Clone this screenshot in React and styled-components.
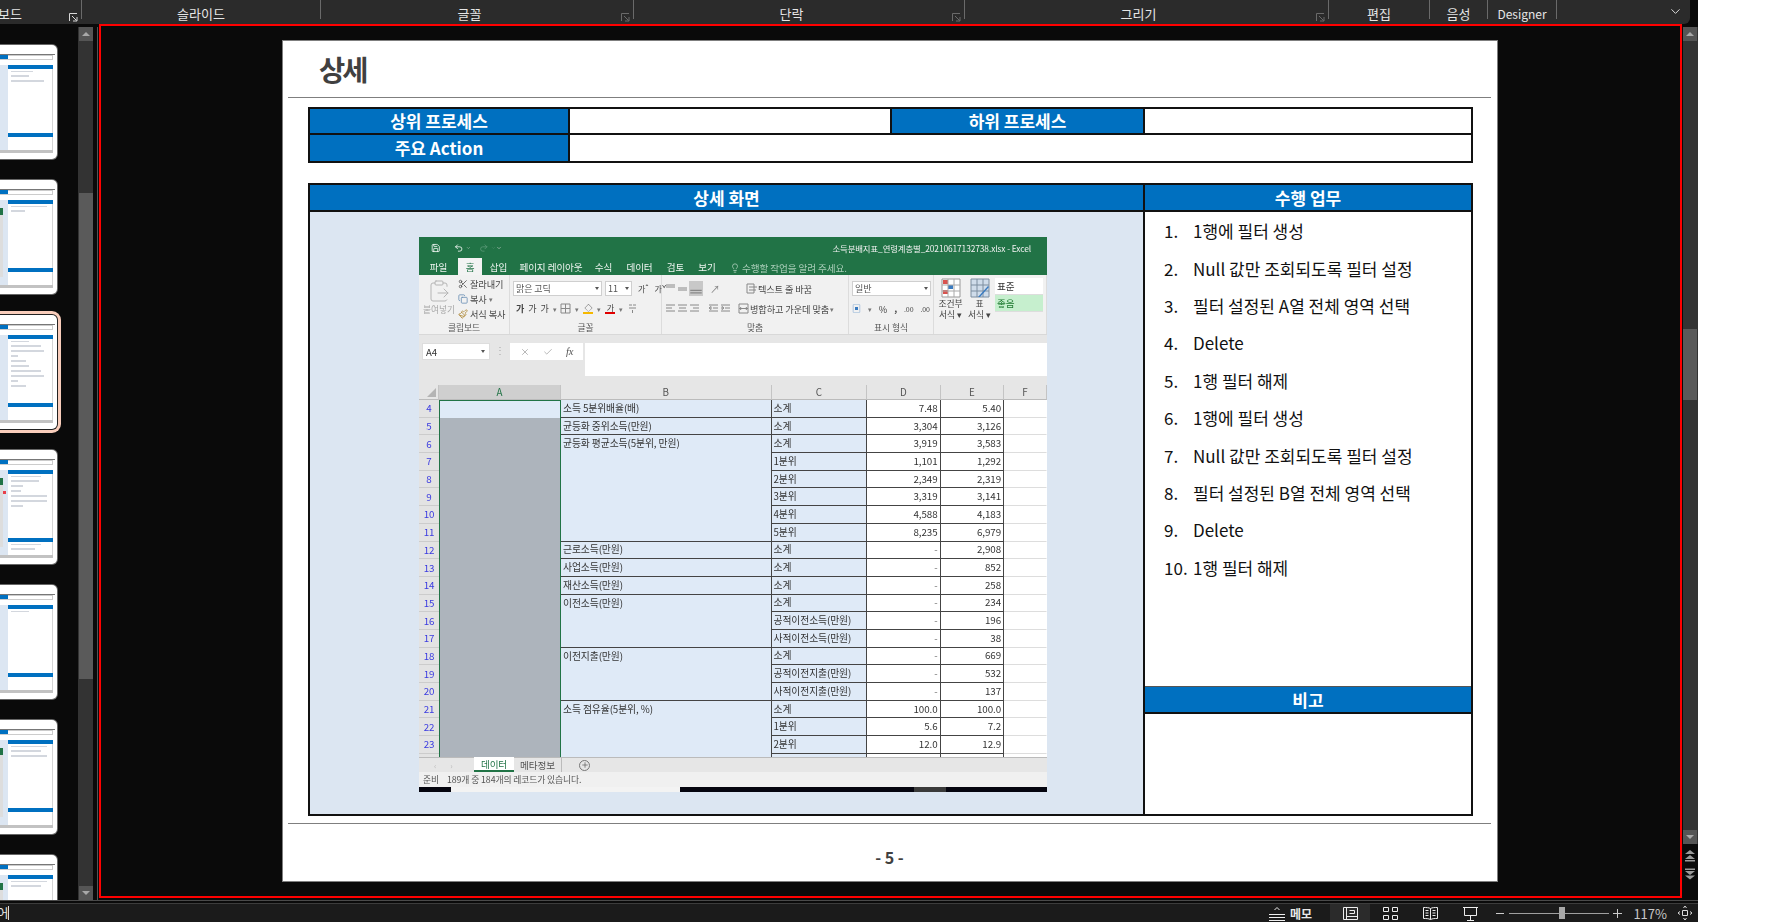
import React from 'react';
import styled, { createGlobalStyle } from 'styled-components';
import { Save, Undo2, Redo2, Lightbulb, Scissors, Copy, Paintbrush, ClipboardPaste, ChevronDown, Plus, X, Check } from 'lucide-react';

const FONT = '"Noto Sans CJK KR", "Noto Sans", "Liberation Sans", sans-serif';

const Global = createGlobalStyle`
  html, body { margin: 0; padding: 0; background: #fff; overflow: hidden; }
  * { box-sizing: border-box; }
  body { font-family: ${FONT}; }
`;

const AppFrame = styled.div`
  width: 1698px; height: 922px; background: #0a0a0a;
  display: flex; flex-direction: column; overflow: hidden;
`;

/* ---------- ribbon ---------- */
const RibbonBar = styled.div`
  height: 24px; width: 1690px; flex: none; background: #2b2b2b; display: flex;
  border-bottom-right-radius: 6px; color: #e6e6e6; font-size: 13px;
`;
const RibbonSeg = styled.div`
  width: ${p => p.$w}px; height: 19px; position: relative; flex: none;
  display: flex; align-items: center; justify-content: ${p => p.$start ? 'flex-start' : 'center'};
  padding-right: ${p => p.$pr || 0}px; padding-top: 7px; white-space: nowrap;
  font-size: ${p => p.$fs || 13}px;
  border-right: 1px solid #6a6a6a;
`;
const Expander = styled.svg`
  position: absolute; right: 3px; bottom: -3px; width: 9px; height: 9px;
`;
const ChevronSlot = styled.div`
  flex: 1; display: flex; justify-content: flex-end; align-items: center; padding: 4px 7px 6px 0; color: #e8e8e8;
`;
const CutLabel = styled.span`margin-left: -26px;`;
const Exp = ({ dim }) => (
  <Expander viewBox="0 0 9 9" fill="none" stroke={dim ? '#6a6a6a' : '#d8d8d8'} strokeWidth="1">
    <path d="M.5 8V.5H8M3 3l4.5 4.5M8 4v4H4" />
  </Expander>
);

/* ---------- main ---------- */
const MainRow = styled.div`flex: 1; display: flex; min-height: 0;`;
const LeftPane = styled.div`width: 99px; flex: none; display: flex;`;
const ThumbColumn = styled.div`
  width: 78px; flex: none; overflow: hidden; padding-top: 20.500px;
  display: flex; flex-direction: column; gap: 21px;
`;
const Thumb = styled.div`
  width: 57px; height: 114px; flex: none; background: #fff; border-radius: 0 5px 5px 0; padding-top: 9px;
  display: flex; flex-direction: column;
  box-shadow: ${p => p.$sel ? '0 0 0 1px #222, 0 0 0 4px #f9cdbb' : '0 0 0 1px #666'};
  position: relative;
`;
const ThumbRule = styled.div`height: 1px; width: 55px; background: #777; flex: none;`;
const ThumbTop = styled.div`
  height: 5px; width: 53px; flex: none; display: flex; border: 1px solid #ccc; border-left: none;
  &::before { content: ''; width: 8px; margin-top: -1px; height: 4px; background: #0070c0; }
`;
const ThumbBody = styled.div`flex: none; margin-top: 5px; height: 85px; width: 53px; display: flex;`;
const ThumbShot = styled.div`width: 8px; background: #dce6f2; padding-top: ${p => p.$shot ? 8 : 0}px; display: flex; flex-direction: column; flex: none;`;
const ThumbGreen = styled.div`width: 3px; height: 7px; background: #217346; flex: none;`;
const ThumbSheet = styled.div`width: 3px; height: 62px; background: #ddd; flex: none;`;
const ThumbRed = styled.div`width: 6px; height: 3px; background: #e8404a; margin: 6px 0 -9px; flex: none;`;
const ThumbRight = styled.div`flex: 1; border-right: 1.5px solid #d5d5d5; display: flex; flex-direction: column;`;
const ThumbHead = styled.div`height: 4px; background: #0070c0; flex: none; margin-right: -1px;`;
const ThumbList = styled.div`height: ${p => p.$h || 64}px; padding: 2px 0 0 3px; display: flex; flex-direction: column; gap: 3.1px; flex: none;`;
const ThumbLine = styled.div`height: 1.9px; width: ${p => p.$w}px; background: #d3d7de; flex: none;`;
const ThumbFoot = styled.div`height: 3px; width: 53px; background: #c2c2c2; flex: none;`;

const ThumbItem = ({ lines, notes, shot, red, sel }) => (
  <Thumb $sel={sel}>
    <ThumbRule />
    <ThumbTop />
    <ThumbBody>
      <ThumbShot $shot={shot}>
        {shot && <ThumbGreen />}
        {red && <ThumbRed />}
        {shot && <ThumbSheet />}
      </ThumbShot>
      <ThumbRight>
        <ThumbHead />
        <ThumbList>{lines.map((w, i) => <ThumbLine key={i} $w={w} />)}</ThumbList>
        <ThumbHead />
        {notes && <ThumbList $h={13}>{notes.map((w, i) => <ThumbLine key={i} $w={w} />)}</ThumbList>}
      </ThumbRight>
    </ThumbBody>
    <ThumbFoot />
  </Thumb>
);

const VScroll = styled.div`
  width: 15px; flex: none; background: #333; margin-top: 3px; display: flex; flex-direction: column; position: relative;
  height: ${p => p.$h}px;
`;
const ScrollBtn = styled.div`
  width: 14px; height: 14px; background: #555; margin-left: .5px; flex: none; display: flex; align-items: center; justify-content: center;
  &::after {
    content: ''; border-left: 4px solid transparent; border-right: 4px solid transparent;
    ${p => p.$down ? 'border-top: 4px solid #a8a8a8;' : 'border-bottom: 4px solid #a8a8a8;'}
  }
`;
const ScrollGap = styled.div`height: ${p => p.$h}px; flex: none;`;
const ScrollThumb = styled.div`height: ${p => p.$h}px; flex: none; background: #5a5a5a; margin-left: .5px; width: 14px;`;
const PaneSep = styled.div`width: 1px; margin: 3px 0 0 4px; background: #555; flex: none;`;

const Editor = styled.div`
  width: 1583px; height: 874px; flex: none; border: 2px solid #f00; background: #0a0a0a;
  padding: 15px 0 0 182px;
`;
const RightRail = styled.div`width: 16px; flex: none; display: flex; flex-direction: column; align-items: center;`;
const StepBtn = styled.svg`width: 12px; height: 12px; margin-top: ${p => p.$mt}px; flex: none;`;

/* ---------- slide ---------- */
const Slide = styled.div`
  width: 1214px; height: 840px; background: #fff; box-shadow: 0 0 0 1px #7f7f7f;
  display: flex; flex-direction: column; color: #111;
`;
const SlideTitle = styled.div`
  height: 57px; margin: 0 6px 0 5px; padding: 3px 0 0 31px; border-bottom: 1px solid #7f7f7f;
  font-size: 28.500px; font-weight: 700; color: #404040; letter-spacing: -3px; line-height: 50px; flex: none;
`;
const SummaryGrid = styled.div`
  margin: 9px 0 0 25px; width: 1165px; height: 56px; flex: none; display: grid;
  grid-template-columns: 260px 322px 253px 1fr; grid-template-rows: minmax(0, 1fr) minmax(0, 1fr);
  border: 2px solid #111;
`;
const HeadCell = styled.div`
  background: #0070c0; color: #fff; font-weight: 700; font-size: 17px; line-height: 1; display: flex; align-items: center; justify-content: center;
  border-right: 2px solid #111; border-bottom: ${p => p.$last ? 'none' : '2px solid #111'}; padding-bottom: 1px;
`;
const BlankCell = styled.div`
  background: #fff; border-right: ${p => p.$end ? 'none' : '2px solid #111'};
  border-bottom: ${p => p.$last ? 'none' : '2px solid #111'};
  grid-column: ${p => p.$col || 'auto'};
`;
const DetailGrid = styled.div`
  margin: 20px 0 0 25px; width: 1165px; height: 633px; flex: none; display: grid;
  grid-template-columns: 835px 1fr; border: 2px solid #111;
`;
const DetailLeft = styled.div`display: flex; flex-direction: column; border-right: 2px solid #111; min-height: 0;`;
const DetailRight = styled.div`display: flex; flex-direction: column; min-height: 0;`;
const BandHead = styled.div`
  height: ${p => p.$h || 27}px; background: #0070c0; color: #fff; font-weight: 700; font-size: 17px; flex: none;
  display: flex; align-items: center; justify-content: center; border-bottom: 2px solid #111;
  ${p => p.$top ? 'border-top: 1px solid #555;' : ''}
`;
const ShotArea = styled.div`flex: 1; background: #dce6f2; padding: 25px 0 0 109px;`;
const TaskList = styled.ol`
  list-style: none; margin: 0; padding: 0 0 0 19px; height: 474px; flex: none;
  font-size: 17px; color: #111;
`;
const TaskItem = styled.li`height: 37.400px; display: flex; align-items: center;`;
const TaskNum = styled.span`width: 29px; flex: none;`;
const Spacer = styled.div`flex: 1;`;
const Footer = styled.div`
  margin: 7px 6px 0 5px; border-top: 1px solid #7f7f7f; flex: 1; display: flex; align-items: center; justify-content: center;
  font-size: 16px; font-weight: 700; color: #404040; padding-top: 8px;
`;

/* ---------- excel ---------- */
const Excel = styled.div`
  width: 628px; height: 555px; display: flex; flex-direction: column; background: #e6e6e6; overflow: hidden;
  font-size: 9.600px; color: #333; filter: blur(.35px); letter-spacing: -.1px;
`;
const XlTitle = styled.div`
  height: 21px; flex: none; background: #217346; color: #f2f2f2; display: flex; align-items: center;
  padding: 0 16px 0 12px;
`;
const XlQuick = styled.div`display: flex; align-items: center; gap: 3px; width: 65px; flex: none;`;
const XlQuickGap = styled.span`width: ${p => p.$w}px; flex: none;`;
const XlDocName = styled.div`margin-left: auto; font-size: 8.400px; white-space: nowrap;`;
const XlTabs = styled.div`
  height: 17px; flex: none; background: #217346; color: #eef5f0; display: flex; align-items: flex-end;
`;
const XlTab = styled.div`
  height: 17px; display: flex; align-items: center; justify-content: center; flex: none;
  width: ${p => p.$w}px; white-space: nowrap;
  ${p => p.$on ? 'background: #f3f3f3; color: #217346;' : ''}
`;
const XlTip = styled.div`display: flex; align-items: center; gap: 2px; color: #a9cdb8; margin-left: 8px; white-space: nowrap;`;
const XlRibbon = styled.div`height: 60px; flex: none; background: #f1f1f1; display: flex; border-bottom: 1px solid #d8d8d8;`;
const XlGroup = styled.div`
  width: ${p => p.$w}px; flex: none; display: flex; flex-direction: column; border-right: 1px solid #dcdcdc; font-size: 9.200px;
`;
const XlGroupBody = styled.div`flex: 1; display: flex; padding: ${p => p.$pt ?? 6}px 3px 0; gap: ${p => p.$gap || 3}px; min-height: 0;`;
const XlGroupName = styled.div`height: 11px; flex: none; text-align: center; font-size: 8.800px; color: #555; line-height: 10px;`;
const XlPaste = styled.div`
  width: 34px; display: flex; flex-direction: column; align-items: center; color: #a8a8a8; font-size: 8.800px; white-space: nowrap; padding-top: 2px; flex: none;
`;
const XlCol = styled.div`display: flex; flex-direction: column; gap: ${p => p.$gap ?? 4}px; flex: ${p => p.$flex ? 1 : 'none'}; min-width: 0;`;
const XlRow = styled.div`display: flex; align-items: center; gap: ${p => p.$gap || 3}px; height: ${p => p.$h || 15}px; white-space: nowrap; color: #444;`;
const XlSelect = styled.div`
  width: ${p => p.$w}px; height: 15px; background: #fff; border: 1px solid #cfcfcf; display: flex; align-items: center; padding: 0 2px;
  flex: none; justify-content: space-between; font-size: 9px; color: #555;
  &::after { content: ''; border-left: 2px solid transparent; border-right: 2px solid transparent; border-top: 3px solid #555; }
`;
const XlGlyph = styled.span`display: inline-block; font-size: ${p => p.$s || 9}px; color: ${p => p.$c || '#444'}; font-weight: ${p => p.$b ? 700 : 400}; flex: none; margin-left: ${p => p.$ml || 0}px;`;
const XlSwatch = styled.span`
  display: inline-flex; flex-direction: column; align-items: center; font-size: 8px; line-height: 9px; flex: none; color: #444;
  &::after { content: ''; width: 10px; height: 2.500px; background: ${p => p.$c}; }
`;
const XlLines = styled.svg`width: 11px; height: 11px; flex: none; ${p => p.$on ? 'background: #c8c8c8; height: 15px; width: 14px;' : ''}`;
const XlBig = styled.div`
  width: ${p => p.$w}px; display: flex; flex-direction: column; align-items: center; font-size: 8.800px; line-height: 11px; flex: none; color: #444; white-space: nowrap;
`;
const XlStyleBox = styled.div`
  height: ${p => p.$h}px; background: ${p => p.$bg}; color: ${p => p.$c}; border-bottom: 1px solid #ddd; padding: 0 2px; font-size: 9.600px;
  display: flex; align-items: center; white-space: nowrap;
`;
const XlFormula = styled.div`
  height: 50px; flex: none; background: #e6e6e6; display: flex; align-items: flex-start; padding: 8px 0 0 3px;
`;
const XlName = styled.div`
  width: 68px; height: 17px; background: #fff; border: 1px solid #ddd; flex: none; display: flex; align-items: center; justify-content: space-between; padding: 0 4px 0 3px;
  &::after { content: ''; border-left: 2px solid transparent; border-right: 2px solid transparent; border-top: 3px solid #555; }
`;
const XlDots = styled.div`width: 20px; flex: none; text-align: center; color: #aaa; line-height: 15px;`;
const XlFx = styled.div`
  width: 73px; height: 17px; background: #fff; flex: none; display: flex; align-items: center; justify-content: space-around; color: #aaa; padding: 0 3px;
`;
const XlFxMark = styled.i`font-family: "Liberation Serif", serif; color: #555; font-size: 10.500px;`;
const XlInput = styled.div`flex: 1; height: 33px; background: #fff; margin-left: 2px;`;

const Sheet = styled.div`
  height: 372px; flex: none; display: grid; overflow: hidden; background: #fff;
  grid-template-columns: 20px 122px 210.500px 95.500px 73.500px 63.500px 1fr;
  grid-template-rows: 15px repeat(21, 17.700px);
  font-size: 9.800px; color: #333;
`;
const ColHead = styled.div`
  grid-row: 1; grid-column: ${p => p.$col}; background: ${p => p.$on ? '#cfcfcf' : '#e6e6e6'}; color: ${p => p.$on ? '#217346' : '#555'};
  border-right: 1px solid #c4c4c4; border-bottom: 1px solid #bbb; display: flex; align-items: center; justify-content: center;
`;
const Corner = styled(ColHead)`
  align-items: flex-end; justify-content: flex-end; padding: 0 2px 2px 0;
  &::after { content: ''; border-left: 9px solid transparent; border-bottom: 9px solid #b4b4b4; }
`;
const RowNum = styled.div`
  grid-column: 1; grid-row: ${p => p.$r}; background: #e3e3e3; color: #3a3ae0; border-bottom: 1px solid #ccc;
  display: flex; align-items: center; justify-content: center; font-size: 9.800px;
`;
const SelA = styled.div`
  grid-column: 2; grid-row: 2 / span 21; background: #adb4bc; border-left: 1.500px solid #217346; border-right: 1.500px solid #217346;
  border-top: 1.500px solid #217346;
  &::before { content: ''; display: block; height: 16.500px; background: #dfeaf7; }
`;
const Cell = styled.div`
  grid-column: ${p => p.$c}; grid-row: ${p => p.$r} / span ${p => p.$span || 1};
  background: ${p => p.$bg || '#fff'}; padding: ${p => p.$right ? '0 2px 0 0' : '0 0 0 2px'};
  display: flex; align-items: ${p => p.$span ? 'flex-start' : 'center'}; justify-content: ${p => p.$right ? 'flex-end' : 'flex-start'};
  line-height: 17px; white-space: nowrap; overflow: hidden;
  border-bottom: 1px solid ${p => p.$line || '#444'}; border-right: 1px solid ${p => p.$rline || '#444'};
  color: ${p => p.$muted ? '#777' : '#333'};
`;
const XlTabBar = styled.div`height: 15px; flex: none; background: #e6e6e6; border-top: 1px solid #bbb; display: flex; align-items: center; padding-left: 15px; color: #555;`;
const XlNav = styled.span`width: 40px; color: #bbb; font-size: 8px; letter-spacing: 6px; flex: none;`;
const XlSheetTab = styled.div`
  height: 15px; display: flex; align-items: center; justify-content: center; width: ${p => p.$w}px; flex: none; margin-top: -1px;
  ${p => p.$on ? 'background: #fff; color: #217346; border-bottom: 2px solid #217346;' : 'border-right: 1px solid #bbb;'}
`;
const XlAdd = styled.span`
  width: 11px; height: 11px; border: 1px solid #777; border-radius: 50%; margin-left: 17px; display: flex; align-items: center; justify-content: center; color: #555; flex: none;
`;
const XlStatus = styled.div`height: 15px; flex: none; background: #f0f0f0; display: flex; align-items: center; padding-left: 4px; gap: 8px; font-size: 8.800px; color: #555;`;
const XlStrip = styled.div`height: 5px; flex: 1; background: #05050f; display: flex;`;
const StripPart = styled.div`width: ${p => p.$w}px; flex: none; background: ${p => p.$c};`;

/* ---------- status ---------- */
const StatusOuter = styled.div`height: 22px; flex: none; border-top: 1px solid #4a4a4a; padding-top: 2px; background: #0a0a0a;`;
const StatusBar = styled.div`
  height: 19px; background: #1b1b1b; border-top: 1px solid #3c3c3c; display: flex; align-items: center; color: #d0d0d0; font-size: 12.500px; overflow: hidden;
`;
const CutText = styled.div`margin-left: -3px; width: 12px; flex: none; border-right: 1px solid #ddd; height: 14px; line-height: 14px; white-space: nowrap; color: #e8e8e8;`;
const StatusNote = styled.div`
  margin-left: auto; display: flex; align-items: center; gap: 5px; width: 61px; flex: none; font-weight: 700; color: #e8e8e8; font-size: 12px;
`;
const ViewBtn = styled.div`
  width: 40px; height: 18px; flex: none; display: flex; align-items: center; justify-content: center;
  background: ${p => p.$on ? '#2b2b2b' : 'transparent'};
`;
const Zoomer = styled.div`display: flex; align-items: center; margin-left: 6px; flex: none;`;
const ZoomTrack = styled.div`
  width: 100px; height: 1px; background: #a0a0a0; margin: 0 4px; position: relative;
`;
const ZoomHandle = styled.div`
  position: absolute; left: 50px; top: -5.500px; width: 6px; height: 12px; background: #a8a8a8;
`;
const ZoomPct = styled.div`width: 42px; text-align: right; flex: none; font-size: 13px; color: #c8c8c8; margin-left: 3px;`;
const FitBtn = styled.svg`width: 16px; height: 16px; margin: 0 5px 0 10px; flex: none;`;
const StatusIcon = styled.svg`width: ${p => p.$w || 15}px; height: 15px; flex: none;`;

/* data */
const tasks = ['1행에 필터 생성','Null 값만 조회되도록 필터 설정','필터 설정된 A열 전체 영역 선택','Delete','1행 필터 해제','1행에 필터 생성','Null 값만 조회되도록 필터 설정','필터 설정된 B열 전체 영역 선택','Delete','1행 필터 해제'];
const thumbs = [
  { lines: [22, 18, 33] },
  { lines: [36, 14], shot: true },
  { lines: [18, 30, 33, 7, 15, 18, 30, 33, 7, 15], sel: true },
  { lines: [30, 28, 12, 10, 36, 36, 12], notes: [30, 24], shot: true, red: true },
  { lines: [18] },
  { lines: [36, 30, 36], shot: true },
  { lines: [36, 30], shot: true },
];
const segs = [
  { w: 82, label: '클립보드', exp: true, start: true, cut: true },
  { w: 239, label: '슬라이드' },
  { w: 313, label: '글꼴', exp: true, dim: true, pr: 15 },
  { w: 331, label: '단락', exp: true, dim: true, pr: 15 },
  { w: 364, label: '그리기', exp: true, dim: true, pr: 16 },
  { w: 101, label: '편집' },
  { w: 58, label: '음성' },
  { w: 69, label: 'Designer', fs: 12 },
];
const rowsData = [
  ['소계','7.48','5.40'],['소계','3,304','3,126'],['소계','3,919','3,583'],['1분위','1,101','1,292'],['2분위','2,349','2,319'],
  ['3분위','3,319','3,141'],['4분위','4,588','4,183'],['5분위','8,235','6,979'],['소계','-','2,908'],['소계','-','852'],['소계','-','258'],
  ['소계','-','234'],['공적이전소득(만원)','-','196'],['사적이전소득(만원)','-','38'],['소계','-','669'],['공적이전지출(만원)','-','532'],
  ['사적이전지출(만원)','-','137'],['소계','100.0','100.0'],['1분위','5.6','7.2'],['2분위','12.0','12.9'],['3분위','',''],
];
const bCells = [
  { r: 4, t: '소득 5분위배율(배)' }, { r: 5, t: '균등화 중위소득(만원)' }, { r: 6, s: 6, t: '균등화 평균소득(5분위, 만원)' },
  { r: 12, t: '근로소득(만원)' }, { r: 13, t: '사업소득(만원)' }, { r: 14, t: '재산소득(만원)' }, { r: 15, s: 3, t: '이전소득(만원)' },
  { r: 18, s: 3, t: '이전지출(만원)' }, { r: 21, s: 4, t: '소득 점유율(5분위, %)' },
];
const BLUE = '#dfeaf7';
const Lines = ({ on, d }) => (
  <XlLines $on={on} viewBox="0 0 11 11" stroke="#888" strokeWidth="1" fill="none"><path d={d} /></XlLines>
);
const Drop = () => <XlGlyph $s={7} $c="#777">▾</XlGlyph>;

function ExcelShot() {
  return (
    <Excel>
      <XlTitle>
        <XlQuick>
          <Save size={12} color="#fff" />
          <XlQuickGap $w={7} />
          <Undo2 size={12} color="#fff" />
          <ChevronDown size={6} color="#ddd" />
          <XlQuickGap $w={2} />
          <Redo2 size={12} color="#5d9b78" />
          <ChevronDown size={6} color="#5d9b78" />
        </XlQuick>
        <ChevronDown size={6} color="#ddd" />
        <XlDocName>소득분배지표_연령계층별_20210617132738.xlsx - Excel</XlDocName>
      </XlTitle>
      <XlTabs>
        <XlTab $w={39}>파일</XlTab>
        <XlTab $w={24} $on>홈</XlTab>
        <XlTab $w={33}>삽입</XlTab>
        <XlTab $w={72}>페이지 레이아웃</XlTab>
        <XlTab $w={33}>수식</XlTab>
        <XlTab $w={39}>데이터</XlTab>
        <XlTab $w={33}>검토</XlTab>
        <XlTab $w={30}>보기</XlTab>
        <XlTip><Lightbulb size={10} />수행할 작업을 알려 주세요.</XlTip>
      </XlTabs>
      <XlRibbon>
        <XlGroup $w={91}>
          <XlGroupBody $gap={2} $pt={2}>
            <XlPaste><ClipboardPaste size={24} strokeWidth={1} color="#b5b5b5" />붙여넣기</XlPaste>
            <XlCol $gap={1}>
              <XlRow $h={14} $gap={2}><Scissors size={10} color="#555" />잘라내기</XlRow>
              <XlRow $h={14} $gap={2}><Copy size={10} color="#6a8fb5" />복사 <Drop /></XlRow>
              <XlRow $h={14} $gap={2}><Paintbrush size={10} color="#b08a3a" />서식 복사</XlRow>
            </XlCol>
          </XlGroupBody>
          <XlGroupName>클립보드</XlGroupName>
        </XlGroup>
        <XlGroup $w={152}>
          <XlGroupBody>
            <XlCol $gap={5}>
              <XlRow $gap={0}>
                <XlSelect $w={89}>맑은 고딕</XlSelect>
                <XlSelect $w={27}>11</XlSelect>
                <XlGlyph $s={8} $ml={3}>가ˆ</XlGlyph>
                <XlGlyph $s={8} $ml={3}>가ˇ</XlGlyph>
              </XlRow>
              <XlRow $gap={4}>
                <XlGlyph $b $ml={3}>가</XlGlyph><XlGlyph>가</XlGlyph><XlGlyph>가</XlGlyph><Drop />
                <Lines d="M1 1h9v9H1zM5.500 1v9M1 5.500h9" /><Drop />
                <XlSwatch $c="#f5b800">◇</XlSwatch><Drop />
                <XlSwatch $c="#e00000">가</XlSwatch><Drop />
                <Lines d="M2 2h3M6 2h3M2 5h7M5.500 7v3" />
              </XlRow>
            </XlCol>
          </XlGroupBody>
          <XlGroupName>글꼴</XlGroupName>
        </XlGroup>
        <XlGroup $w={187}>
          <XlGroupBody>
            <XlCol $gap={5}>
              <XlRow $gap={1}>
                <Lines d="M1 2h9M1 4h9" /><Lines d="M1 5h9M1 7h9" /><Lines on d="M1 9h9M1 7h9" />
                <XlGlyph $s={10} $c="#888" $ml={6}>↗</XlGlyph>
                <XlQuickGap $w={24} />
                <Lines d="M1 1h7v9H1zM3 4h8M3 7h7" />텍스트 줄 바꿈
              </XlRow>
              <XlRow $gap={1}>
                <Lines d="M1 2h9M1 5h6M1 8h9" /><Lines d="M1 2h9M2 5h7M1 8h9" /><Lines d="M1 2h9M4 5h6M1 8h9" />
                <XlQuickGap $w={6} />
                <Lines d="M1 2h9M5 5h5M1 8h9M1 5l2-1.500v3z" /><Lines d="M1 2h9M5 5h5M1 8h9M4 5L2 3.500v3z" />
                <XlQuickGap $w={5} />
                <Lines d="M1 1h9v9H1zM1 5.500h9M3 4l-1 1.500L3 7M8 4l1 1.500L8 7" />병합하고 가운데 맞춤 <Drop />
              </XlRow>
            </XlCol>
          </XlGroupBody>
          <XlGroupName>맞춤</XlGroupName>
        </XlGroup>
        <XlGroup $w={85}>
          <XlGroupBody>
            <XlCol $gap={5}>
              <XlSelect $w={79}>일반</XlSelect>
              <XlRow $gap={7}>
                <XlGlyph $s={9} $c="#3a7bc0">▣</XlGlyph><Drop /><span>%</span><XlGlyph $b>,</XlGlyph>
                <XlGlyph $s={7}>.00</XlGlyph><XlGlyph $s={7}>.00</XlGlyph>
              </XlRow>
            </XlCol>
          </XlGroupBody>
          <XlGroupName>표시 형식</XlGroupName>
        </XlGroup>
        <XlGroup $w={113}>
          <XlGroupBody $gap={2} $pt={3}>
            <XlBig $w={27}>
              <svg width="20" height="20" viewBox="0 0 20 20"><path d="M1 1h18v18H1z" fill="#fff" stroke="#999" /><path d="M2 2h5v4H2z" fill="#d9534f" /><path d="M7 7h5v4H7z" fill="#3a7bc0" /><path d="M2 12h5v4H2z" fill="#d9534f" /><path d="M1 7h18M1 13h18M7 1v18M13 1v18" stroke="#aaa" fill="none" /></svg>
              <span>조건부</span><span>서식 ▾</span>
            </XlBig>
            <XlBig $w={27}>
              <svg width="20" height="20" viewBox="0 0 20 20"><path d="M1 1h18v18H1z" fill="#cfdcea" stroke="#7d8ea0" /><path d="M1 7h18M1 13h18M7 1v18M13 1v18" stroke="#7d8ea0" fill="none" /><path d="M8 19l10-11 1 1L10 19z" fill="#3a7bc0" /></svg>
              <span>표</span><span>서식 ▾</span>
            </XlBig>
            <XlCol $gap={0} $flex>
              <XlStyleBox $h={17} $bg="#fff" $c="#333">표준</XlStyleBox>
              <XlStyleBox $h={17} $bg="#c6efce" $c="#1f7a30">좋음</XlStyleBox>
            </XlCol>
          </XlGroupBody>
          <XlGroupName />
        </XlGroup>
      </XlRibbon>
      <XlFormula>
        <XlName>A4</XlName>
        <XlDots>⋮</XlDots>
        <XlFx><X size={10} /><Check size={10} /><XlFxMark>fx</XlFxMark></XlFx>
        <XlInput />
      </XlFormula>
      <Sheet>
        <Corner $col={1} />
        {['A', 'B', 'C', 'D', 'E', 'F'].map((c, i) => <ColHead key={c} $on={c === 'A'} $col={i + 2}>{c}</ColHead>)}
        {rowsData.map((_, i) => <RowNum key={i} $r={i + 2}>{i + 4 < 24 ? i + 4 : ''}</RowNum>)}
        <SelA />
        {bCells.map(b => <Cell key={b.r} $c={3} $r={b.r - 2} $span={b.s} $bg={BLUE}>{b.t}</Cell>)}
        {rowsData.map((row, i) => (
          <React.Fragment key={i}>
            <Cell $c={4} $r={i + 2} $bg={BLUE}>{row[0]}</Cell>
            <Cell $c={5} $r={i + 2} $right $muted={row[1] === '-'}>{row[1]}</Cell>
            <Cell $c={6} $r={i + 2} $right>{row[2]}</Cell>
            <Cell $c={7} $r={i + 2} $line="#ddd" $rline="#fff" />
          </React.Fragment>
        ))}
      </Sheet>
      <XlTabBar>
        <XlNav>‹ ›</XlNav>
        <XlSheetTab $w={40} $on>데이터</XlSheetTab>
        <XlSheetTab $w={48}>메타정보</XlSheetTab>
        <XlAdd><Plus size={8} /></XlAdd>
      </XlTabBar>
      <XlStatus><span>준비</span><span>189개 중 184개의 레코드가 있습니다.</span></XlStatus>
      <XlStrip>
        <StripPart $w={32} $c="#05050f" />
        <StripPart $w={229} $c="#f3f3f3" />
        <StripPart $w={234} $c="#05050f" />
        <StripPart $w={32} $c="#3a3a3a" />
      </XlStrip>
    </Excel>
  );
}

function ZoomMinus() {
  return <svg width="9" height="9" viewBox="0 0 9 9" stroke="#ccc"><path d="M0 4.500h8" /></svg>;
}
function ZoomPlus() {
  return <svg width="9" height="9" viewBox="0 0 9 9" stroke="#ccc"><path d="M0 4.500h9M4.500 0v9" /></svg>;
}

export default function App() {
  return (
    <AppFrame>
      <Global />
      <RibbonBar>
        {segs.map(s => (
          <RibbonSeg key={s.label} $w={s.w} $pr={s.pr} $start={s.start} $fs={s.fs}>
            {s.cut ? <CutLabel>{s.label}</CutLabel> : s.label}
            {s.exp && <Exp dim={s.dim} />}
          </RibbonSeg>
        ))}
        <ChevronSlot><ChevronDown size={15} strokeWidth={1.5} /></ChevronSlot>
      </RibbonBar>
      <MainRow>
        <LeftPane>
          <ThumbColumn>{thumbs.map((t, i) => <ThumbItem key={i} {...t} />)}</ThumbColumn>
          <VScroll $h={873}>
            <ScrollBtn />
            <ScrollGap $h={152} />
            <ScrollThumb $h={486} />
            <Spacer />
            <ScrollBtn $down />
          </VScroll>
          <PaneSep />
        </LeftPane>
        <Editor>
          <Slide>
            <SlideTitle>상세</SlideTitle>
            <SummaryGrid>
              <HeadCell>상위 프로세스</HeadCell>
              <BlankCell />
              <HeadCell>하위 프로세스</HeadCell>
              <BlankCell $end />
              <HeadCell $last>주요 Action</HeadCell>
              <BlankCell $last $end $col="2 / span 3" />
            </SummaryGrid>
            <DetailGrid>
              <DetailLeft>
                <BandHead>상세 화면</BandHead>
                <ShotArea><ExcelShot /></ShotArea>
              </DetailLeft>
              <DetailRight>
                <BandHead>수행 업무</BandHead>
                <TaskList>
                  {tasks.map((t, i) => <TaskItem key={i}><TaskNum>{i + 1}.</TaskNum>{t}</TaskItem>)}
                </TaskList>
                <BandHead $h={28} $top>비고</BandHead>
                <Spacer />
              </DetailRight>
            </DetailGrid>
            <Footer>- 5 -</Footer>
          </Slide>
        </Editor>
        <RightRail>
          <VScroll $h={817}>
            <ScrollBtn />
            <ScrollGap $h={288} />
            <ScrollThumb $h={71} />
            <Spacer />
            <ScrollBtn $down />
          </VScroll>
          <StepBtn $mt={6} viewBox="0 0 12 12" fill="#9a9a9a"><path d="M6 0l5 4H1zM6 5l5 4H1zM1 10h10v1.500H1z" /></StepBtn>
          <StepBtn $mt={6} viewBox="0 0 12 12" fill="#9a9a9a"><path d="M1 .5h10V2H1zM1 3h10l-5 4zM1 7.500h10l-5 4z" /></StepBtn>
        </RightRail>
      </MainRow>
      <StatusOuter>
        <StatusBar>
          <CutText>어</CutText>
          <StatusNote>
            <StatusIcon $w={16} viewBox="0 0 16 15" stroke="#eee" fill="none" strokeWidth="1"><path d="M0 8.500h16M0 11.500h16M0 14.500h16M5.500 4L8 1.500 10.500 4" /></StatusIcon>
            메모
          </StatusNote>
          <ViewBtn $on>
            <StatusIcon viewBox="0 0 15 15" stroke="#eee" fill="none"><path d="M.5 1.500h14v12H.5zM3.500 1.500v12M3.500 10.500h11M6.500 4.500h5v3h-5" /></StatusIcon>
          </ViewBtn>
          <ViewBtn>
            <StatusIcon viewBox="0 0 15 15" stroke="#eee" fill="none"><path d="M.5 1.500h5v4h-5zM9.500 1.500h5v4h-5zM.5 9.500h5v4h-5zM9.500 9.500h5v4h-5z" /></StatusIcon>
          </ViewBtn>
          <ViewBtn>
            <StatusIcon viewBox="0 0 15 15" stroke="#eee" fill="none"><path d="M7.500 2.500C6 1.500 3 1.500.5 1.500v11c2.500 0 5 0 7 1 2-1 4.500-1 7-1v-11c-2.500 0-5.500 0-7 1zM7.500 2.500v11M2.500 4.500H5.500M2.500 7H5.500M2.500 9.500H5.500M9.500 4.500h3M9.500 7h3M9.500 9.500h3" /></StatusIcon>
          </ViewBtn>
          <ViewBtn>
            <StatusIcon viewBox="0 0 15 15" stroke="#eee" fill="none"><path d="M0 1.500h15M1.500 1.500v8h12v-8M7.500 9.500v4.500M4 14.500h7" /></StatusIcon>
          </ViewBtn>
          <Zoomer>
            <ZoomMinus />
            <ZoomTrack><ZoomHandle /></ZoomTrack>
            <ZoomPlus />
          </Zoomer>
          <ZoomPct>117%</ZoomPct>
          <FitBtn viewBox="0 0 16 16" stroke="#ddd" fill="none"><path d="M5.500 5.500h5v5h-5zM8 1L6.500 3M8 1l1.500 2M8 15l-1.500-2M8 15l1.500-2M1 8l2-1.500M1 8l2 1.500M15 8l-2-1.500M15 8l-2 1.500" /></FitBtn>
        </StatusBar>
      </StatusOuter>
    </AppFrame>
  );
}
